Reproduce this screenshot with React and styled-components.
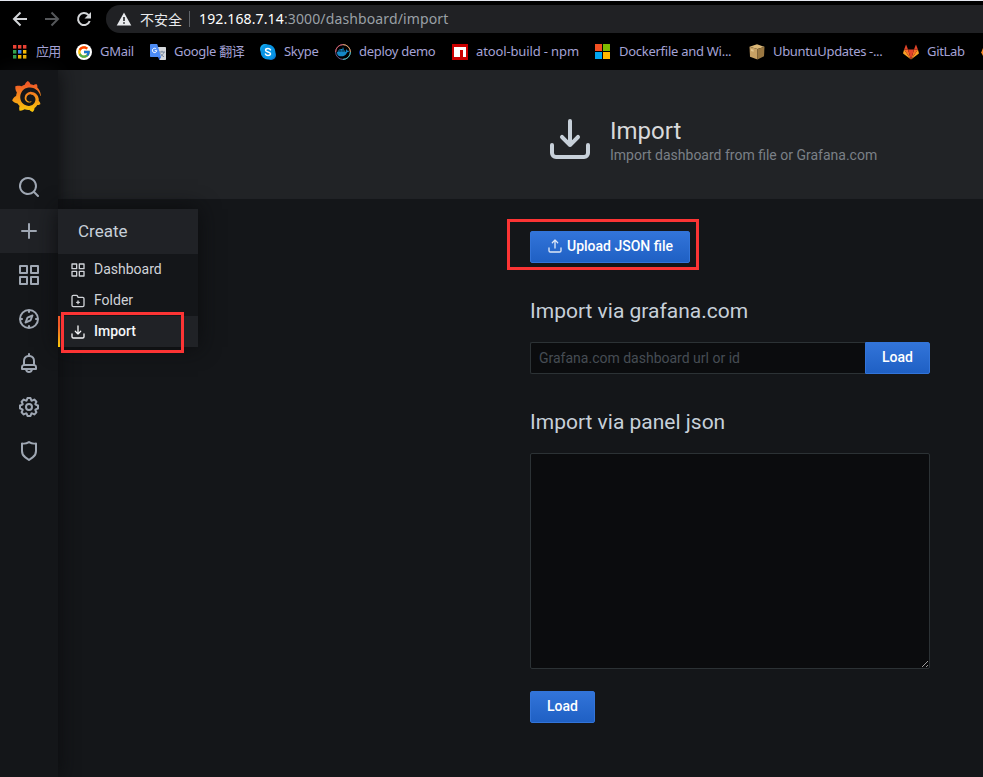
import React from 'react';
import styled, { createGlobalStyle } from 'styled-components';
import { FcGoogle } from 'react-icons/fc';
import { SiGrafana, SiDocker } from 'react-icons/si';

const GlobalStyle = createGlobalStyle`
  *, *::before, *::after { box-sizing: border-box; }
  body {
    margin: 0;
    background: #141619;
    color: #c7d0d9;
    font-family: Roboto, "Noto Sans CJK SC", sans-serif;
    font-size: 14px;
    overflow: hidden;
  }
`;

const PATHS = {
  search: 'M21.71,20.29,18,16.61A9,9,0,1,0,16.61,18l3.68,3.68a1,1,0,0,0,1.42,0A1,1,0,0,0,21.71,20.29ZM11,18a7,7,0,1,1,7-7A7,7,0,0,1,11,18Z',
  plus: 'M19,11H13V5a1,1,0,0,0-2,0v6H5a1,1,0,0,0,0,2h6v6a1,1,0,0,0,2,0V13h6a1,1,0,0,0,0-2Z',
  apps: 'M10,13H3a1,1,0,0,0-1,1v7a1,1,0,0,0,1,1h7a1,1,0,0,0,1-1V14A1,1,0,0,0,10,13ZM9,20H4V15H9ZM21,2H14a1,1,0,0,0-1,1v7a1,1,0,0,0,1,1h7a1,1,0,0,0,1-1V3A1,1,0,0,0,21,2ZM20,9H15V4h5Zm1,4H14a1,1,0,0,0-1,1v7a1,1,0,0,0,1,1h7a1,1,0,0,0,1-1V14A1,1,0,0,0,21,13Zm-1,7H15V15h5ZM10,2H3A1,1,0,0,0,2,3v7a1,1,0,0,0,1,1h7a1,1,0,0,0,1-1V3A1,1,0,0,0,10,2ZM9,9H4V4H9Z',
  bell: 'M18,13.18V10a6,6,0,0,0-5-5.91V3a1,1,0,0,0-2,0V4.09A6,6,0,0,0,6,10v3.18A3,3,0,0,0,4,16v2a1,1,0,0,0,1,1H8.14a4,4,0,0,0,7.72,0H19a1,1,0,0,0,1-1V16A3,3,0,0,0,18,13.18ZM8,10a4,4,0,0,1,8,0v3H8Zm4,10a2,2,0,0,1-1.72-1h3.44A2,2,0,0,1,12,20Zm6-3H6V16a1,1,0,0,1,1-1H17a1,1,0,0,1,1,1Z',
  cog: 'M21.32,9.55l-1.89-.63.89-1.78A1,1,0,0,0,20.13,6L18,3.87a1,1,0,0,0-1.15-.19l-1.78.89-.63-1.89A1,1,0,0,0,13.5,2h-3a1,1,0,0,0-.95.68L8.92,4.57,7.14,3.68A1,1,0,0,0,6,3.87L3.87,6a1,1,0,0,0-.19,1.15l.89,1.78-1.89.63A1,1,0,0,0,2,10.5v3a1,1,0,0,0,.68.95l1.89.63-.89,1.78A1,1,0,0,0,3.87,18L6,20.13a1,1,0,0,0,1.15.19l1.78-.89.63,1.89a1,1,0,0,0,.95.68h3a1,1,0,0,0,.95-.68l.63-1.89,1.78.89A1,1,0,0,0,18,20.13L20.13,18a1,1,0,0,0,.19-1.15l-.89-1.78,1.89-.63A1,1,0,0,0,22,13.5v-3A1,1,0,0,0,21.32,9.55ZM20,12.78l-1.2.4A2,2,0,0,0,17.64,16l.57,1.14-1.1,1.1L16,17.64a2,2,0,0,0-2.79,1.16l-.4,1.2H11.22l-.4-1.2A2,2,0,0,0,8,17.64l-1.14.57-1.1-1.1L6.36,16A2,2,0,0,0,5.2,13.18L4,12.78V11.22l1.2-.4A2,2,0,0,0,6.36,8L5.79,6.89l1.1-1.1L8,6.36A2,2,0,0,0,10.82,5.2l.4-1.2h1.56l.4,1.2A2,2,0,0,0,16,6.36l1.14-.57,1.1,1.1L17.64,8a2,2,0,0,0,1.16,2.79l1.2.4ZM12,8a4,4,0,1,0,4,4A4,4,0,0,0,12,8Zm0,6a2,2,0,1,1,2-2A2,2,0,0,1,12,14Z',
  shield: 'M19.63,3.65a1,1,0,0,0-.84-.2,8,8,0,0,1-6.22-1.27,1,1,0,0,0-1.14,0A8,8,0,0,1,5.21,3.45a1,1,0,0,0-.84.2A1,1,0,0,0,4,4.43v7.45a9,9,0,0,0,3.77,7.33l3.65,2.6a1,1,0,0,0,1.16,0l3.65-2.6A9,9,0,0,0,20,11.88V4.43A1,1,0,0,0,19.63,3.65ZM18,11.88a7,7,0,0,1-2.93,5.7L12,19.77,8.93,17.58A7,7,0,0,1,6,11.88V5.58a10,10,0,0,0,6-1.39,10,10,0,0,0,6,1.39Z',
  import: 'M21,14a1,1,0,0,0-1,1v4a1,1,0,0,1-1,1H5a1,1,0,0,1-1-1V15a1,1,0,0,0-2,0v4a3,3,0,0,0,3,3H19a3,3,0,0,0,3-3V15A1,1,0,0,0,21,14Zm-9.71,1.71a1,1,0,0,0,.33.21.94.94,0,0,0,.76,0,1,1,0,0,0,.33-.21l4-4a1,1,0,0,0-1.42-1.42L13,12.59V3a1,1,0,0,0-2,0v9.59l-2.29-2.3a1,1,0,1,0-1.42,1.42Z',
  upload: 'M8.71,7.71,11,5.41V15a1,1,0,0,0,2,0V5.41l2.29,2.3a1,1,0,0,0,1.42,0,1,1,0,0,0,0-1.42l-4-4a1,1,0,0,0-.33-.21,1,1,0,0,0-.76,0,1,1,0,0,0-.33.21l-4,4A1,1,0,1,0,8.71,7.71ZM21,14a1,1,0,0,0-1,1v4a1,1,0,0,1-1,1H5a1,1,0,0,1-1-1V15a1,1,0,0,0-2,0v4a3,3,0,0,0,3,3H19a3,3,0,0,0,3-3V15A1,1,0,0,0,21,14Z',
  folderPlus: 'M14,13H13V12a1,1,0,0,0-2,0v1H10a1,1,0,0,0,0,2h1v1a1,1,0,0,0,2,0V15h1a1,1,0,0,0,0-2Zm5-7.5H12.72l-.32-1a3,3,0,0,0-2.84-2H5a3,3,0,0,0-3,3v13a3,3,0,0,0,3,3H19a3,3,0,0,0,3-3V8.5A3,3,0,0,0,19,5.5Zm1,13a1,1,0,0,1-1,1H5a1,1,0,0,1-1-1V5.5a1,1,0,0,1,1-1H9.56a1,1,0,0,1,.95.68l.54,1.64A1,1,0,0,0,12,7.5h7a1,1,0,0,1,1,1Z',
};

function Icon({ name, size }) {
  if (name === 'compass') {
    return (
      <svg width={size} height={size} viewBox="0 0 24 24" fill="none" stroke="currentColor" strokeWidth="2">
        <circle cx="12" cy="12" r="9" />
        <path d="M12 3v2.800M12 18.200V21M3 12h2.800M18.200 12H21" />
        <path d="M15.500 8.500l-2 4.900-5 2.100 2-4.900z" strokeWidth="1.900" strokeLinejoin="round" />
      </svg>
    );
  }
  return (
    <svg width={size} height={size} viewBox="0 0 24 24" fill="currentColor">
      <path d={PATHS[name]} />
    </svg>
  );
}

/* Browser chrome */

const Chrome = styled.header`
  height: 70px;
  background: #000;
  border-top: 1px solid #e4e7ef;
  font-family: "Noto Sans", "Noto Sans CJK SC", sans-serif;
`;

const Toolbar = styled.div`
  display: flex;
  align-items: center;
  height: 32px;
  padding: 4px 0 0 12px;
`;

const NavButton = styled.span`
  display: flex;
  width: 32px;
  height: 28px;
  align-items: center;
  color: ${(p) => (p.$dim ? '#55575a' : '#d3d5d8')};
  svg { display: block; }
`;

const AddressBar = styled.div`
  display: flex;
  flex: 1;
  align-items: center;
  height: 28px;
  margin-left: -2px;
  padding-left: 10px;
  border-radius: 14px 0 0 14px;
  background: #202124;
  white-space: nowrap;
`;

const Insecure = styled.span`
  width: 49px;
  margin-left: 8px;
  color: #e8eaed;
  font: 14px/28px "Noto Sans CJK SC", sans-serif;
`;

const Divider = styled.span`
  width: 1px;
  height: 16px;
  margin-right: 9px;
  background: #5f6368;
`;

const Url = styled.span`
  color: #9aa0a6;
  font-size: 14px;
  line-height: 28px;
  letter-spacing: 0.13px;
  b { color: #fff; font-weight: 400; }
`;

const Bookmarks = styled.nav`
  display: flex;
  align-items: center;
  height: 37px;
  padding-left: 12px;
`;

const Bookmark = styled.a`
  display: flex;
  flex: none;
  align-items: center;
  gap: 8px;
  width: ${(p) => p.$width}px;
  height: 18px;
  color: #a5a3d6;
  font-size: 13px;
  line-height: 18px;
  letter-spacing: ${(p) => p.$spacing}px;
  white-space: nowrap;
  svg { display: block; flex: none; }
`;

const BookmarkLabel = styled.span`
  padding-bottom: 2px;
`;

const GoogleDisc = styled.span`
  display: flex;
  flex: none;
  align-items: center;
  justify-content: center;
  width: 16px;
  height: 16px;
  border-radius: 50%;
  background: #fff;
`;

const APP_COLORS = ['#ea4335', '#ea4335', '#ea4335', '#34a853', '#4285f4', '#fbbc05', '#34a853', '#fbbc05', '#fbbc05'];

const AppsIcon = () => (
  <svg width="16" height="16" viewBox="0 0 16 16">
    {APP_COLORS.map((c, i) => (
      <rect key={i} x={1 + (i % 3) * 5} y={1 + Math.floor(i / 3) * 5} width="3.4" height="3.6" fill={c} />
    ))}
  </svg>
);

const GoogleIcon = () => (
  <GoogleDisc><FcGoogle size={14} /></GoogleDisc>
);

const TranslateIcon = () => (
  <svg width="16" height="16" viewBox="0 0 16 16">
    <path d="M5 3h10.3c.4 0 .7.3.7.7V15.3c0 .4-.3.7-.7.7H9.5z" fill="#d5d8dc" />
    <path d="M9 8h6M12 6.800V8M14 8c-.6 2-2 3.600-3.500 4.500M10.500 9.500c.8 1.500 2 2.600 3.500 3.300" stroke="#6f8197" strokeWidth=".9" fill="none" />
    <path d="M.7 0h6.500L11 13H.7C.3 13 0 12.700 0 12.300V.7C0 .3.3 0 .7 0z" fill="#4c8bf5" />
    <path d="M8 13h3l-1.500 3z" fill="#3367d6" />
    <path d="M6.200 4.900A2.200 2.200 0 1 0 6.800 6.700H4.700" stroke="#fff" strokeWidth="1" fill="none" />
  </svg>
);

const SkypeIcon = () => (
  <svg width="16" height="16" viewBox="0 0 16 16">
    <circle cx="5" cy="5" r="5" fill="#14a9ee" />
    <circle cx="11" cy="11" r="5" fill="#0a7fd8" />
    <circle cx="8" cy="8" r="7.400" fill="#0794e3" />
    <path d="M10.500 5.900C10 4.900 9 4.600 8 4.600c-1.500 0-2.400.7-2.400 1.600C5.600 8.500 10.500 7.300 10.500 9.800c0 1-1 1.700-2.500 1.700-1.300 0-2.200-.5-2.600-1.500" fill="none" stroke="#fff" strokeWidth="1.500" strokeLinecap="round" />
  </svg>
);

const Stack = styled.span`
  display: grid;
  flex: none;
  width: 16px;
  height: 16px;
  place-items: center;
  > svg { grid-area: 1 / 1; }
`;

const DeployIcon = () => (
  <Stack>
    <svg width="16" height="16" viewBox="0 0 16 16" fill="none" strokeWidth="1">
      <circle cx="8" cy="8" r="7.400" stroke="#6c5686" />
      <path d="M8 .6A7.400 7.400 0 0 1 15.400 8" stroke="#e0a15b" />
      <path d="M15.400 8A7.400 7.400 0 0 1 8 15.400" stroke="#45c7bd" />
      <path d="M.6 8A7.400 7.400 0 0 1 8 .6" stroke="#d65d62" />
    </svg>
    <SiDocker size={12} color="#1488c6" />
  </Stack>
);

const NpmIcon = () => (
  <svg width="16" height="16" viewBox="0 0 16 16">
    <path fill="#cb0000" d="M0 0h16v16H0z" />
    <path fill="#fff" d="M2 3h12v10H11V6H8v7H2z" />
  </svg>
);

const MicrosoftIcon = () => (
  <svg width="16" height="16" viewBox="0 0 16 16">
    <path fill="#f25022" d="M0 0h7v7H0z" />
    <path fill="#7fba00" d="M8 0h7v7H8z" />
    <path fill="#00a4ef" d="M0 8h7v7H0z" />
    <path fill="#ffb900" d="M8 8h7v7H8z" />
  </svg>
);

const PackageIcon = () => (
  <svg width="16" height="16" viewBox="0 0 16 16">
    <path fill="#dcb877" d="M.5 2.800 8 .3 15.500 2.800 8.500 5z" />
    <path fill="#c8a164" d="M.5 2.800l8 2.200V15.600L1 12.700z" />
    <path fill="#9a7741" d="M8.500 5l7-2.200-.5 9.400-6.500 3.400z" />
    <path fill="#e3c68e" d="M2 5l2.600.8v2L2 7z" />
  </svg>
);

const GitLabIcon = () => (
  <svg width="16" height="16" viewBox="0 0 16 16">
    <path fill="#fca326" d="M1.100 5.500.1 9c-.1.300 0 .6.300.8L8 15.500zM14.900 5.500l1 3.500c.1.300 0 .6-.3.800L8 15.500z" />
    <path fill="#fc6d26" d="M1.100 5.500H5L8 15.500zM14.900 5.500H11L8 15.500z" />
    <path fill="#e24329" d="M5 5.500h6L8 15.500zM1.100 5.500 2.800.9c.1-.2.400-.2.500 0L5 5.500zM14.900 5.500 13.200.9c-.1-.2-.4-.2-.5 0L11 5.500z" />
  </svg>
);

const EdgeIcon = () => (
  <svg width="16" height="16" viewBox="0 0 16 16">
    <path fill="#fc8b26" d="M.2 8.500 2 4v8z" />
  </svg>
);

const BOOKMARKS = [
  { label: '应用', icon: AppsIcon, width: 64, spacing: -0.8 },
  { label: 'GMail', icon: GoogleIcon, width: 74, spacing: -0.3 },
  { label: 'Google 翻译', icon: TranslateIcon, width: 110, spacing: -0.3 },
  { label: 'Skype', icon: SkypeIcon, width: 75, spacing: -0.3 },
  { label: 'deploy demo', icon: DeployIcon, width: 117, spacing: -0.3 },
  { label: 'atool-build - npm', icon: NpmIcon, width: 143, spacing: -0.13 },
  { label: 'Dockerfile and Wi...', icon: MicrosoftIcon, width: 154, spacing: -0.27 },
  { label: 'UbuntuUpdates -...', icon: PackageIcon, width: 154, spacing: -0.33 },
  { label: 'GitLab', icon: GitLabIcon, width: 78, spacing: -0.3 },
  { label: '', icon: EdgeIcon, width: 16, spacing: 0 },
];

/* Application */

const AppBody = styled.div`
  display: flex;
  height: 707px;
`;

const Sidebar = styled.aside`
  position: relative;
  z-index: 2;
  flex: none;
  width: 58px;
  background: #141619;
  box-shadow: 0 0 20px #0b0c0e;
`;

const Logo = styled.div`
  height: 95px;
  padding: 11px 0 0 11px;
  svg { display: block; }
`;

const SideItem = styled.div`
  position: relative;
  display: flex;
  align-items: center;
  justify-content: center;
  height: 44px;
  color: #9fa7b3;
  background: ${(p) => (p.$active ? '#202226' : 'transparent')};
`;

const Flyout = styled.div`
  position: absolute;
  top: 0;
  left: 58px;
  width: 140px;
  background: #141619;
  box-shadow: 0 0 20px #0b0c0e;
`;

const FlyoutTitle = styled.div`
  height: 45px;
  padding-left: 20px;
  background: #202226;
  color: #c7d0d9;
  font-size: 17px;
  line-height: 44px;
`;

const FlyoutItem = styled.div`
  position: relative;
  display: flex;
  align-items: center;
  gap: 8px;
  height: 31px;
  padding-left: 12px;
  background: ${(p) => (p.$active ? '#202226' : 'transparent')};
  color: ${(p) => (p.$active ? '#f4f5f7' : '#d0d3d8')};
  font-weight: ${(p) => (p.$active ? 500 : 400)};
  line-height: 28px;
  &::before {
    content: "";
    position: absolute;
    inset: 0 auto 0 0;
    width: 2px;
    background: ${(p) => (p.$active ? 'linear-gradient(#f05a28 30%, #fbca0a 99%)' : 'none')};
  }
`;

const FlyoutLabel = styled.span`
  padding-bottom: 2px;
`;

const Highlight = styled.span`
  position: absolute;
  top: ${(p) => p.$top}px;
  left: ${(p) => p.$left}px;
  width: ${(p) => p.$width}px;
  height: ${(p) => p.$height}px;
  border: 3px solid #fc3434;
  pointer-events: none;
`;

const Page = styled.main`
  flex: 1;
  min-width: 0;
  background: #141619;
`;

const PageHeader = styled.div`
  display: flex;
  gap: 16px;
  height: 129px;
  padding: 45px 0 0 488px;
  background: #212326;
  border-bottom: 1px solid #202226;
  color: #c7d0d9;
  svg { display: block; }
`;

const PageTitle = styled.h1`
  margin: 2px 0 0;
  color: #d8d9da;
  font-size: 24px;
  font-weight: 400;
  line-height: 28px;
`;

const PageSubtitle = styled.div`
  color: #7b8087;
  line-height: 20px;
`;

const Content = styled.div`
  display: flex;
  flex-direction: column;
  align-items: flex-start;
  width: 400px;
  margin-left: 472px;
  padding-top: 32px;
`;

const Anchor = styled.div`
  position: relative;
`;

const Button = styled.button`
  display: flex;
  align-items: center;
  justify-content: center;
  gap: 4px;
  width: ${(p) => p.$width}px;
  height: 32px;
  padding: 0 0 2px;
  border: 1px solid #3274d9;
  border-radius: ${(p) => (p.$joined ? '0 2px 2px 0' : '2px')};
  background: linear-gradient(180deg, #3274d9, #1f60c4);
  color: #fff;
  font: 500 14px/30px Roboto, sans-serif;
  svg { opacity: 0.85; }
`;

const SectionTitle = styled.h2`
  margin: ${(p) => p.$top}px 0 0;
  color: #c7d0d9;
  font-size: 21px;
  font-weight: 400;
  line-height: 26px;
`;

const UrlRow = styled.div`
  display: flex;
  margin-top: 18px;
`;

const UrlInput = styled.input`
  width: 335px;
  height: 32px;
  padding: 0 8px;
  border: 1px solid #2c3235;
  border-right: 0;
  border-radius: 2px 0 0 2px;
  background: #0b0c0e;
  color: #c7d0d9;
  font: 14px Roboto, sans-serif;
  outline: none;
  &::placeholder { color: #464c54; opacity: 1; }
`;

const JsonArea = styled.textarea`
  display: block;
  width: 400px;
  height: 216px;
  margin: 18px 0 22px;
  border: 1px solid #2c3235;
  border-radius: 2px;
  background: #0b0c0e;
  color: #c7d0d9;
  outline: none;
  resize: both;
`;

const SIDE_ITEMS = ['search', 'plus', 'apps', 'compass', 'bell', 'cog', 'shield'];

const CREATE_LINKS = [
  { label: 'Dashboard', icon: 'apps' },
  { label: 'Folder', icon: 'folderPlus' },
  { label: 'Import', icon: 'import', active: true },
];

function BrowserChrome() {
  return (
    <Chrome>
      <Toolbar>
        <NavButton>
          <svg width="16" height="16" viewBox="0 0 16 16" fill="none" stroke="currentColor" strokeWidth="2">
            <path d="M15 8H2.500M8.500 1.500 2 8l6.500 6.500" />
          </svg>
        </NavButton>
        <NavButton $dim>
          <svg width="16" height="16" viewBox="0 0 16 16" fill="none" stroke="currentColor" strokeWidth="2">
            <path d="M1 8h12.500M7.500 1.500 14 8l-6.500 6.500" />
          </svg>
        </NavButton>
        <NavButton>
          <svg width="16" height="16" viewBox="0 0 16 16" fill="none" stroke="currentColor" strokeWidth="2">
            <path d="M13.700 10A6 6 0 1 1 12.400 3.900L14 5.500" />
            <path d="M15 1v6.500H8.500z" fill="currentColor" stroke="none" />
          </svg>
        </NavButton>
        <AddressBar>
          <svg width="16" height="16" viewBox="0 0 16 16">
            <path d="M8 1.500 15.300 14.500H.7z" fill="#e8eaed" />
            <path d="M8 6v4M8 11.200v1.600" stroke="#202124" strokeWidth="1.600" />
          </svg>
          <Insecure>不安全</Insecure>
          <Divider />
          <Url><b>192.168.7.14</b>:3000/dashboard/import</Url>
        </AddressBar>
      </Toolbar>
      <Bookmarks>
        {BOOKMARKS.map(({ label, icon: Glyph, width, spacing }, i) => (
          <Bookmark key={i} $width={width} $spacing={spacing}>
            <Glyph />
            <BookmarkLabel>{label}</BookmarkLabel>
          </Bookmark>
        ))}
      </Bookmarks>
    </Chrome>
  );
}

function CreateMenu() {
  return (
    <Flyout>
      <FlyoutTitle>Create</FlyoutTitle>
      {CREATE_LINKS.map(({ label, icon, active }) => (
        <FlyoutItem key={label} $active={active}>
          <Icon name={icon} size={16} />
          <FlyoutLabel>{label}</FlyoutLabel>
          {active && <Highlight $top={-4} $left={3} $width={123} $height={41} />}
        </FlyoutItem>
      ))}
    </Flyout>
  );
}

export default function App() {
  return (
    <>
      <GlobalStyle />
      <BrowserChrome />
      <AppBody>
        <Sidebar>
          <Logo>
            <svg width="0" height="0">
              <linearGradient id="flame" x1="0" y1="0" x2="0" y2="1">
                <stop offset="0.1" stopColor="#f05a28" />
                <stop offset="1" stopColor="#fbca0a" />
              </linearGradient>
            </svg>
            <SiGrafana size={31} fill="url(#flame)" />
          </Logo>
          {SIDE_ITEMS.map((name) => (
            <SideItem key={name} $active={name === 'plus'}>
              <Icon name={name} size={24} />
              {name === 'plus' && <CreateMenu />}
            </SideItem>
          ))}
        </Sidebar>
        <Page>
          <PageHeader>
            <Icon name="import" size={48} />
            <div>
              <PageTitle>Import</PageTitle>
              <PageSubtitle>Import dashboard from file or Grafana.com</PageSubtitle>
            </div>
          </PageHeader>
          <Content>
            <Anchor>
              <Button $width={160}>
                <Icon name="upload" size={16} />
                Upload JSON file
              </Button>
              <Highlight $top={-12} $left={-23} $width={192} $height={51} />
            </Anchor>
            <SectionTitle $top={35}>Import via grafana.com</SectionTitle>
            <UrlRow>
              <UrlInput placeholder="Grafana.com dashboard url or id" />
              <Button $width={65} $joined>Load</Button>
            </UrlRow>
            <SectionTitle $top={35}>Import via panel json</SectionTitle>
            <JsonArea />
            <Button $width={65}>Load</Button>
          </Content>
        </Page>
      </AppBody>
    </>
  );
}
